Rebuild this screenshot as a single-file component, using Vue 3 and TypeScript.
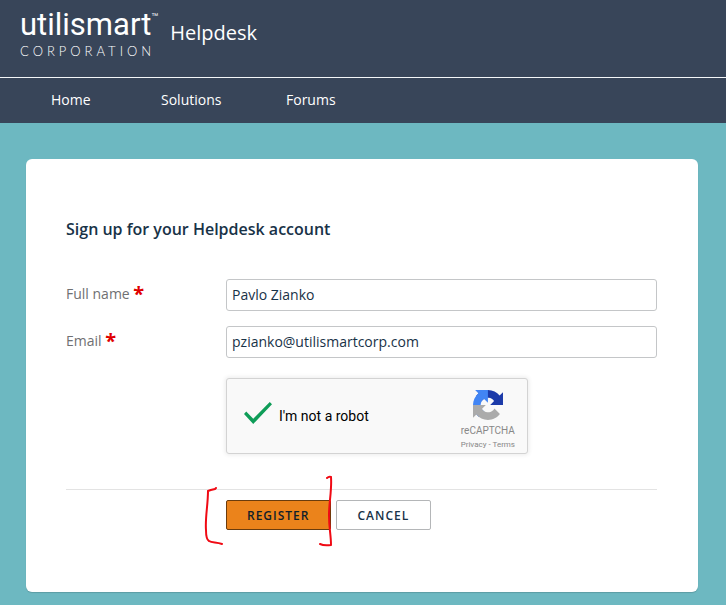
<script setup lang="ts">
import { ref } from 'vue'

interface NavItem {
  label: string
  href: string
}

const navItems: NavItem[] = [
  { label: 'Home', href: '#home' },
  { label: 'Solutions', href: '#solutions' },
  { label: 'Forums', href: '#forums' },
]

const fullName = ref('Pavlo Zianko')
const email = ref('pzianko@utilismartcorp.com')
const verified = ref(true)
</script>

<template>
  <div class="page">
    <header class="header">
      <a class="logo" href="#home">
        <span class="logo-name">utilismart<span class="logo-tm">™</span></span>
        <span class="logo-sub">CORPORATION</span>
      </a>
      <span class="product">Helpdesk</span>
    </header>
    <nav class="nav">
      <a v-for="item in navItems" :key="item.label" class="nav-link" :href="item.href">{{ item.label }}</a>
    </nav>

    <main class="main">
      <form class="card" @submit.prevent>
        <h1 class="title">Sign up for your Helpdesk account</h1>
        <div class="fields">
          <div class="field">
            <label class="label" for="full-name">Full name <span class="required">*</span></label>
            <input id="full-name" v-model="fullName" class="input" type="text" />
          </div>
          <div class="field">
            <label class="label" for="email">Email <span class="required">*</span></label>
            <input id="email" v-model="email" class="input" type="text" />
          </div>
        </div>

        <div class="captcha">
          <label class="captcha-check">
            <input v-model="verified" class="captcha-box" type="checkbox" />
            <span>I'm not a robot</span>
          </label>
          <div class="captcha-brand">
            <svg class="captcha-logo" viewBox="0 0 64 64" aria-hidden="true">
              <path fill="#1c3aa9" d="M64 31.955l-.033-1.37V4.687l-7.16 7.16C50.948 4.674 42.033.093 32.05.093c-10.4 0-19.622 4.96-25.458 12.64l11.736 11.86a15.55 15.55 0 0 1 4.754-5.334c2.05-1.6 4.952-2.906 8.968-2.906.485 0 .86.057 1.135.163 4.976.393 9.288 3.14 11.828 7.124l-8.307 8.307L64 31.953" />
              <path fill="#4285f4" d="M31.862.094l-1.37.033H4.594l7.16 7.16C4.58 13.147 0 22.06 0 32.046c0 10.4 4.96 19.622 12.64 25.458L24.5 45.768a15.55 15.55 0 0 1-5.334-4.754c-1.6-2.05-2.906-4.952-2.906-8.968 0-.485.057-.86.163-1.135.393-4.976 3.14-9.288 7.124-11.828l8.307 8.307L31.86.095" />
              <path fill="#ababab" d="M.001 32.045l.033 1.37v25.898l7.16-7.16c5.86 7.173 14.774 11.754 24.76 11.754 10.4 0 19.622-4.96 25.458-12.64l-11.736-11.86a15.55 15.55 0 0 1-4.754 5.334c-2.05 1.6-4.952 2.906-8.968 2.906-.485 0-.86-.057-1.135-.163-4.976-.393-9.288-3.14-11.828-7.124l8.307-8.307c-10.522.04-22.4.066-27.295-.005" />
            </svg>
            <span class="captcha-name">reCAPTCHA</span>
            <span class="captcha-links"><a href="#privacy">Privacy</a> - <a href="#terms">Terms</a></span>
          </div>
        </div>

        <div class="actions">
          <button class="button primary" type="submit">REGISTER</button>
          <button class="button" type="button">CANCEL</button>
          <svg class="markup" viewBox="0 0 132 76" aria-hidden="true">
            <path d="M12 13 11 14Q6 15 4 16C4 30 1 43 2 55C2 62 3 65 5 66C8 68 12 67 18 69" />
            <path d="M123 3Q125 1 127 2C128 15 125 27 125 40C125 53 127 60 127 70Q120 71 116 69" />
          </svg>
        </div>
      </form>
    </main>
  </div>
</template>

<style>
body {
  background: #6db8c1;
}
</style>

<style scoped>
.page {
  font-family: "Open Sans", "Noto Sans", sans-serif;
  font-size: 14px;
  line-height: 20px;
  color: #183247;
}

.page *,
.page *::before {
  box-sizing: border-box;
}

a {
  color: inherit;
  text-decoration: none;
}

.header {
  display: flex;
  align-items: flex-start;
  gap: 12px;
  height: 78px;
  padding: 6px 20px;
  background: #384559;
  border-bottom: 1px solid #f4f6f8;
  color: #fff;
}

.logo {
  display: flex;
  flex-direction: column;
}

.logo-name {
  display: flex;
  align-items: flex-start;
  font-family: Roboto, "Liberation Sans", sans-serif;
  font-size: 31px;
  line-height: 37px;
}

.logo-tm {
  padding-top: 4px;
  font-family: "Liberation Sans", sans-serif;
  font-size: 7px;
  line-height: 12px;
}

.logo-sub {
  font-family: Lato, sans-serif;
  font-size: 13px;
  font-weight: 300;
  line-height: 16px;
  letter-spacing: 4px;
}

.product {
  padding-top: 13px;
  font-size: 20px;
  line-height: 28px;
}

.nav {
  display: grid;
  grid-template-columns: 110px 125px 1fr;
  padding: 12px 51px 13px;
  background: #384559;
  color: #fff;
}

.nav-link {
  justify-self: start;
}

.main {
  padding: 36px 28px 12px 26px;
}

.card {
  padding: 60px 41px 62px 40px;
  background: #fff;
  border-radius: 6px;
  box-shadow: 0 1px 1px rgba(0, 0, 0, 0.15);
}

.title {
  margin: 0 0 40px;
  font-size: 16px;
  line-height: 20px;
  font-weight: 600;
}

.fields {
  display: flex;
  flex-direction: column;
  gap: 15px;
}

.field {
  display: grid;
  grid-template-columns: 160px 1fr;
}

.label {
  padding-top: 5px;
  color: #6f7072;
}

.required {
  color: #e00000;
  font-size: 20px;
  line-height: 16px;
  font-weight: 700;
  vertical-align: -2px;
}

.input {
  width: 100%;
  height: 32px;
  padding: 0 5px 2px;
  border: 1px solid #c4c6c8;
  border-radius: 3px;
  background: #fff;
  color: #183247;
  font: inherit;
}

.captcha {
  display: flex;
  justify-content: space-between;
  width: 302px;
  height: 76px;
  margin: 20px 0 35px 160px;
  padding: 0 12px 0 17px;
  background: #f9f9f9;
  border: 1px solid #d3d3d3;
  border-radius: 3px;
  box-shadow: 0 0 4px 1px rgba(0, 0, 0, 0.08);
  font-family: Roboto, sans-serif;
  color: #000;
}

.captcha-check {
  display: flex;
  align-items: center;
  gap: 7px;
}

.captcha-box {
  appearance: none;
  width: 28px;
  height: 28px;
  margin: 0;
}

.captcha-box:checked::before {
  content: "";
  display: block;
  width: 28px;
  height: 22px;
  background: #0f9d58;
  clip-path: polygon(0 54%, 8% 43%, 33% 76%, 92% 0, 100% 10%, 33% 100%);
}

.captcha-brand {
  display: flex;
  flex-direction: column;
  align-items: center;
  padding-top: 11px;
  color: #888;
}

.captcha-logo {
  width: 30px;
  height: 30px;
}

.captcha-name {
  margin-top: 5px;
  font-size: 10px;
  line-height: 12px;
}

.captcha-links {
  font-size: 8px;
  line-height: 16px;
}

.actions {
  position: relative;
  display: flex;
  gap: 5px;
  padding: 10px 0 0 160px;
  border-top: 1px solid #e3e3e3;
}

.button {
  height: 30px;
  padding: 0 21px 0 20px;
  border: 1px solid #b4b6b8;
  border-radius: 2px;
  background: #fff;
  color: #183247;
  font-family: inherit;
  font-size: 12px;
  font-weight: 600;
  letter-spacing: 1px;
}

.button.primary {
  border-color: #6b3c0c;
  background: #eb831b;
  color: #10202a;
}

.markup {
  position: absolute;
  top: -15px;
  left: 138px;
  width: 132px;
  height: 76px;
  fill: none;
  stroke: #f00a14;
  stroke-width: 2;
  stroke-linecap: round;
  stroke-linejoin: round;
  pointer-events: none;
}
</style>
